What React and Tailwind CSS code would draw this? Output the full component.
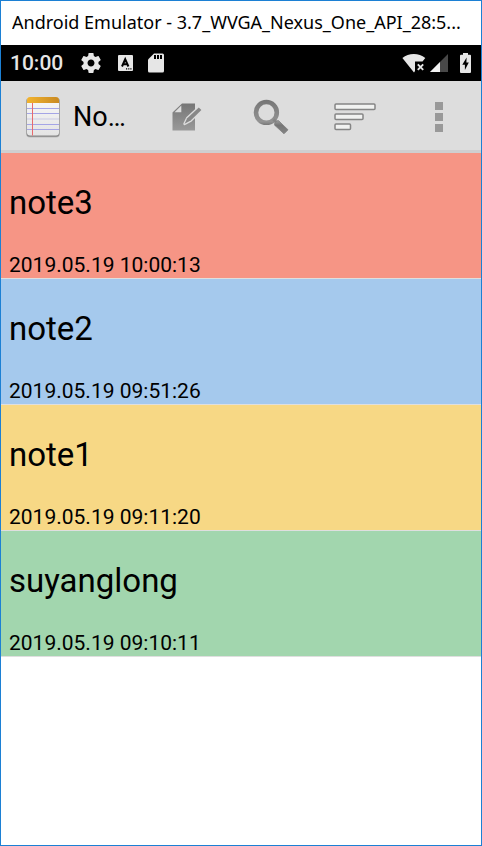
const notes = [
  { title: "note3", date: "2019.05.19 10:00:13", color: "bg-[#f69585]" },
  { title: "note2", date: "2019.05.19 09:51:26", color: "bg-[#a5c9ed]" },
  { title: "note1", date: "2019.05.19 09:11:20", color: "bg-[#f7d885]" },
  { title: "suyanglong", date: "2019.05.19 09:10:11", color: "bg-[#a2d6ae]" },
];

function GearIcon() {
  return (
    <svg className="size-6" viewBox="0 0 24 24" fill="#e6e6e6" aria-hidden="true">
      <path d="M19.43 12.98c.04-.32.07-.64.07-.98s-.03-.66-.07-.98l2.11-1.65c.19-.15.24-.42.12-.64l-2-3.46c-.12-.22-.39-.3-.61-.22l-2.49 1c-.52-.4-1.08-.73-1.69-.98l-.38-2.65C14.46 2.18 14.25 2 14 2h-4c-.25 0-.46.18-.49.42l-.38 2.65c-.61.25-1.17.59-1.69.98l-2.49-1c-.23-.09-.49 0-.61.22l-2 3.46c-.13.22-.07.49.12.64l2.11 1.65c-.04.32-.07.65-.07.98s.03.66.07.98l-2.11 1.65c-.19.15-.24.42-.12.64l2 3.46c.12.22.39.3.61.22l2.49-1c.52.4 1.08.73 1.69.98l.38 2.65c.03.24.24.42.49.42h4c.25 0 .46-.18.49-.42l.38-2.65c.61-.25 1.17-.59 1.69-.98l2.49 1c.23.09.49 0 .61-.22l2-3.46c.12-.22.07-.49-.12-.64l-2.11-1.65zM12 15.5c-1.93 0-3.5-1.57-3.5-3.5s1.57-3.5 3.5-3.5 3.5 1.57 3.5 3.5-1.57 3.5-3.5 3.5z" />
    </svg>
  );
}

function KeyboardIcon() {
  return (
    <svg className="h-4 w-[15px]" viewBox="0 0 15 16" aria-hidden="true">
      <rect width="15" height="16" rx="1" fill="#e6e6e6" />
      <path d="M4 11.5L7.2 4.3L10.4 11.5M5.2 9.3H9.2" fill="none" stroke="#000" strokeWidth="2" />
      <path d="M8 13.2h1.2v1.2H8zM10.2 13.2h1.2v1.2h-1.2zM12.3 13.2h1.2v1.2h-1.2z" fill="#000" />
    </svg>
  );
}

function SdCardIcon() {
  return (
    <svg className="h-5 w-4" viewBox="0 0 16 20" aria-hidden="true">
      <path d="M6 0.5H14.5A1.5 1.5 0 0 1 16 2V18A1.5 1.5 0 0 1 14.5 19.5H1.5A1.5 1.5 0 0 1 0 18V6.5Z" fill="#e6e6e6" />
      <path d="M6 2h2v4H6zM9 2h2v4H9zM12 2h2v4h-2z" fill="#000" />
    </svg>
  );
}

function WifiOffIcon() {
  return (
    <svg className="h-5 w-6" viewBox="0 0 24 20" aria-hidden="true">
      <path d="M0.4 5C3.6 2.2 7.5 1 11.8 1S20 2.2 23.3 5L20.5 8.5H13V18L12 19.4Z" fill="#e6e6e6" />
      <path d="M15.8 11.3L21.2 16.8M21.2 11.3L15.8 16.8" stroke="#e6e6e6" strokeWidth="1.9" />
    </svg>
  );
}

function SignalIcon() {
  return (
    <svg className="size-[18px]" viewBox="0 0 18 18" aria-hidden="true">
      <path d="M18 0V18H0Z" fill="#484848" />
      <path d="M10 8V18H0Z" fill="#f2f2f2" />
    </svg>
  );
}

function BatteryIcon() {
  return (
    <svg className="h-5 w-[11px]" viewBox="0 0 11 20" aria-hidden="true">
      <path d="M3 0H8V1.7H10A1 1 0 0 1 11 2.7V19A1 1 0 0 1 10 20H1A1 1 0 0 1 0 19V2.7A1 1 0 0 1 1 1.7H3Z" fill="#e6e6e6" />
      <path d="M6.6 4.5L2.3 11.8H4.9V17L8.8 9.6H6.4Z" fill="#000" />
    </svg>
  );
}

function NotepadIcon() {
  return (
    <svg className="h-[42px] w-9" viewBox="0 0 36 42" aria-hidden="true">
      <defs>
        <linearGradient id="pad-top" x1="0" x2="1">
          <stop offset="0" stopColor="#f2b32e" />
          <stop offset="1" stopColor="#c98a22" />
        </linearGradient>
        <linearGradient id="pad-paper" x1="0" x2="0" y1="0" y2="1">
          <stop offset="0" stopColor="#f8f8f8" />
          <stop offset="1" stopColor="#e4e4e4" />
        </linearGradient>
      </defs>
      <rect x="1" y="1.6" width="34" height="40" rx="4" fill="#000" opacity="0.15" />
      <rect x="1.6" y="1.4" width="32.8" height="39.4" rx="3.2" fill="#858585" />
      <rect x="2" y="1" width="32" height="38.6" rx="3" fill="url(#pad-paper)" />
      <path d="M2 7V4A3 3 0 0 1 5 1H31A3 3 0 0 1 34 4V7Z" fill="url(#pad-top)" />
      <path d="M2 12.5H34M2 17.5H34M2 28.5H34M2 33.5H34" stroke="#a5a5e6" />
      <path d="M2 23H34" stroke="#dcdce9" strokeWidth="2" />
      <path d="M7.5 7V39.5" stroke="#e86a6c" />
    </svg>
  );
}

function ComposeIcon() {
  return (
    <svg className="h-7 w-[30px]" viewBox="0 0 30 28" aria-hidden="true">
      <defs>
        <linearGradient id="compose-gray" x1="0" x2="0" y1="0" y2="1">
          <stop offset="0" stopColor="#767676" />
          <stop offset="1" stopColor="#999" />
        </linearGradient>
      </defs>
      <path d="M10 0.6H23V27.4H0.5V9.6Z" fill="url(#compose-gray)" />
      <path d="M9.3 2.6V9.2H2.6Z" fill="#dedede" />
      <path d="M26.8 4.4L29.4 7L18.7 17.6L12.6 20.8L15.2 15.3Z" fill="#858585" stroke="#ddd" strokeWidth="2.6" strokeLinejoin="round" />
      <path d="M26.8 4.4L29.4 7L18.7 17.6L12.6 20.8L15.2 15.3Z" fill="#888" />
    </svg>
  );
}

function SearchIcon() {
  return (
    <svg className="size-9" viewBox="0 0 36 36" aria-hidden="true">
      <defs>
        <linearGradient id="search-gray" gradientUnits="userSpaceOnUse" x1="0" x2="0" y1="0" y2="35">
          <stop offset="0" stopColor="#747474" />
          <stop offset="0.65" stopColor="#939393" />
          <stop offset="0.75" stopColor="#757575" />
          <stop offset="1" stopColor="#858585" />
        </linearGradient>
      </defs>
      <circle cx="13.4" cy="13.4" r="10.4" fill="none" stroke="url(#search-gray)" strokeWidth="4.6" />
      <path d="M20.5 20.5L24 24" stroke="#858585" strokeWidth="3" />
      <path d="M25.5 21.6L35 30.8L31 34.8L21.7 26.2Q21 24.5 22.2 23.4L24 21.8Z" fill="url(#search-gray)" stroke="#808080" strokeWidth="0.8" strokeLinejoin="round" />
    </svg>
  );
}

function SortIcon() {
  return (
    <svg className="h-7 w-[42px]" viewBox="0 0 42 28" aria-hidden="true">
      <g fill="#f1f2f1" stroke="#858585" strokeWidth="1.5">
        <rect x="1" y="1" width="40" height="5.5" rx="1" />
        <rect x="1" y="11" width="28" height="5.5" rx="1" />
        <rect x="1" y="21" width="15.5" height="5.5" rx="1" />
      </g>
    </svg>
  );
}

function OverflowIcon() {
  return (
    <svg className="h-[30px] w-2" viewBox="0 0 8 30" fill="#999" aria-hidden="true">
      <path d="M0 0h8v8H0zM0 11h8v8H0zM0 22h8v8H0z" />
    </svg>
  );
}

const actions = [
  { label: "New note", Icon: ComposeIcon },
  { label: "Search", Icon: SearchIcon },
  { label: "Sort", Icon: SortIcon },
  { label: "More options", Icon: OverflowIcon },
];

export default function App() {
  return (
    <div className="flex min-h-screen flex-col border border-[#1c80d4] bg-white font-[Roboto,sans-serif] text-black">
      <div className="flex h-11 items-center pr-1 pb-0.5 pl-[11px]">
        <span className="truncate font-['Noto_Sans',sans-serif] text-[18px] leading-7">
          Android Emulator - 3.7_WVGA_Nexus_One_API_28:5...
        </span>
      </div>

      <div className="flex h-9 items-center bg-black pr-2.5 pl-[9px]">
        <span className="text-[21px] leading-6 font-medium text-[#e6e6e6]">10:00</span>
        <div className="flex items-center gap-[15px] pl-4">
          <GearIcon />
          <KeyboardIcon />
          <SdCardIcon />
        </div>
        <div className="ml-auto flex items-center">
          <WifiOffIcon />
          <div className="pl-1">
            <SignalIcon />
          </div>
          <div className="pl-3">
            <BatteryIcon />
          </div>
        </div>
      </div>

      <header className="flex h-[72px] items-center border-b-[3px] border-[#cfcfd0] bg-[#dddddd] pt-0.5 pl-6">
        <NotepadIcon />
        <h1 className="min-w-0 flex-1 pl-3 text-[27px] leading-8">No…</h1>
        <div className="flex">
          {actions.map(({ label, Icon }) => (
            <button key={label} type="button" aria-label={label} className="flex h-16 w-[84px] items-center justify-center">
              <Icon />
            </button>
          ))}
        </div>
      </header>

      <ul>
        {notes.map((note) => (
          <li key={note.title} className={`border-b border-[#dfdfdf] px-2 ${note.color}`}>
            <h2 className="flex h-[100px] items-center text-[33px] leading-10">{note.title}</h2>
            <p className="text-[21px] leading-[25px]">{note.date}</p>
          </li>
        ))}
      </ul>
    </div>
  );
}
